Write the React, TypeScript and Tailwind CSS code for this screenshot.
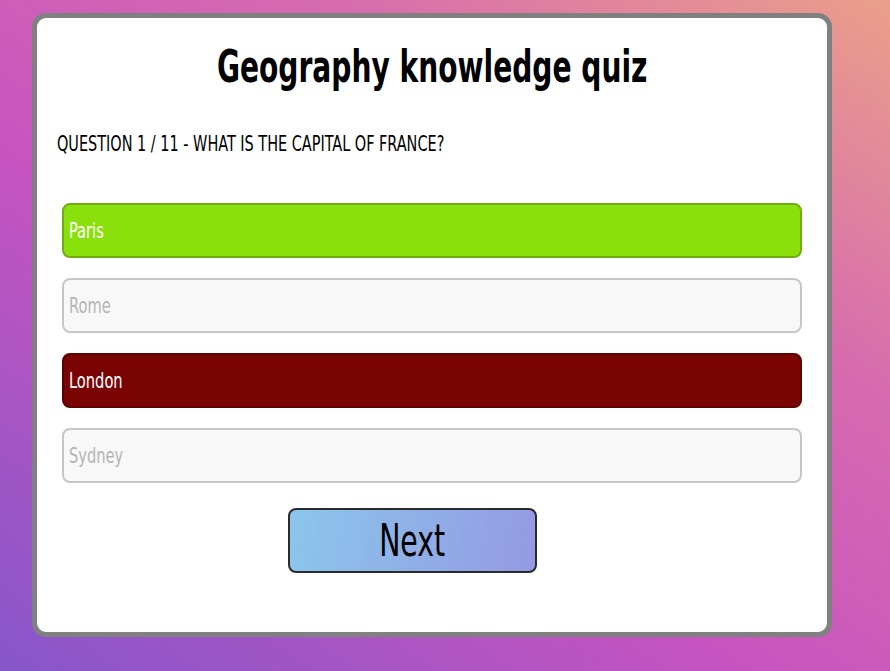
import React from "react";

const answers = [
  { label: "Paris", state: "correct" },
  { label: "Rome", state: "idle" },
  { label: "London", state: "wrong" },
  { label: "Sydney", state: "idle" },
];

const styles: Record<string, string> = {
  correct: "bg-[#8ae00b] border-[#6fae0f] text-white",
  wrong: "bg-[#7a0303] border-[#5c0202] text-white",
  idle: "bg-[#f8f8f8] border-[#c6c6c6] text-[#b4b4b4]",
};

// condensed look: no Oswald offline, so squeeze DejaVu Sans Condensed a bit
const App = () => {
  return (
    <div
      className="min-h-screen w-full pt-[13px] pl-[32px] bg-[linear-gradient(35deg,#8656c9_0%,#c654c0_40%,#d66cae_70%,#ec9f8a_100%)]"
      style={{ fontFamily: '"DejaVu Sans Condensed", "Liberation Sans", sans-serif' }}
    >
      <div className="w-[800px] h-[624px] bg-white border-[5px] border-[#808080] rounded-[14px] px-5">
        <h1 className="text-[44px] font-bold text-black leading-none pt-[27px]">
          <span className="block w-fit mx-auto scale-x-[0.71]">Geography knowledge quiz</span>
        </h1>
        <p className="text-[22px] uppercase text-black mt-[44px] leading-none">
          <span className="block w-fit origin-left scale-x-[0.73]">
            Question 1 / 11 - What is the capital of France?
          </span>
        </p>
        <div className="flex flex-col gap-5 mt-[48px] px-[5px]">
          {answers.map((a) => (
            <button
              key={a.label}
              className={`h-[55px] w-full rounded-lg border-2 flex items-center pl-[5px] text-[22px] leading-none ${styles[a.state]}`}
            >
              <span className="inline-block origin-left scale-x-[0.74]">{a.label}</span>
            </button>
          ))}
        </div>
        <div className="flex mt-[25px] pl-[231px]">
          <button className="w-[249px] h-[65px] rounded-lg border-2 border-[#2a2a2a] bg-[linear-gradient(100deg,#8bc6ec,#949ae2)] text-[45px] text-black leading-none flex items-center justify-center">
            <span className="inline-block scale-x-[0.7]">Next</span>
          </button>
        </div>
      </div>
    </div>
  );
};

export default App;
